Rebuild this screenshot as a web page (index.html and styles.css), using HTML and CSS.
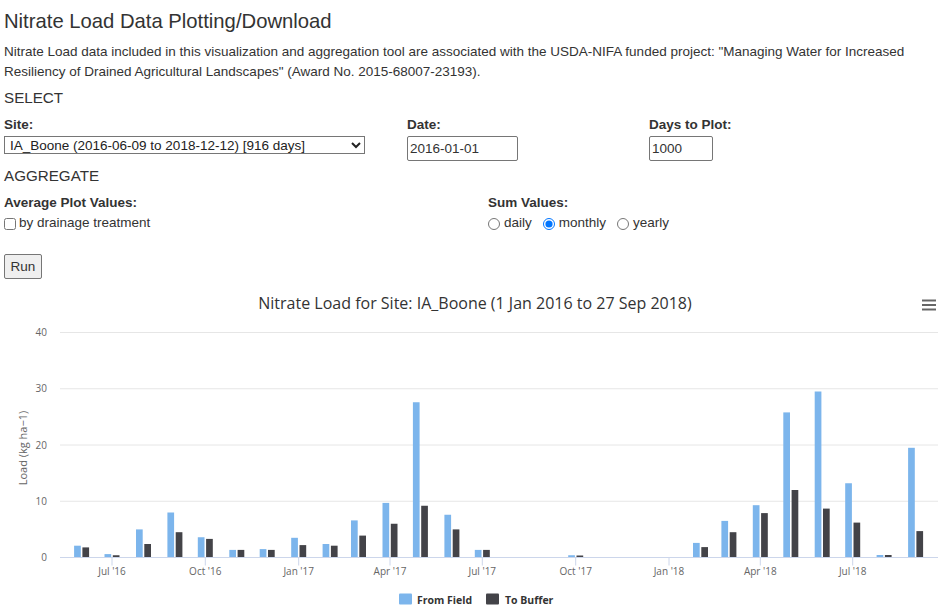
FILE: index.html
```html
<!DOCTYPE html>
<html lang="en">
<head>
<meta charset="utf-8">
<title>Nitrate Load Data Plotting/Download</title>
<link rel="stylesheet" href="styles.css">
</head>
<body>
<div class="page">
  <h1 class="title">Nitrate Load Data Plotting/Download</h1>
  <p class="intro">Nitrate Load data included in this visualization and aggregation tool are associated with the USDA-NIFA funded project: "Managing Water for Increased Resiliency of Drained Agricultural Landscapes" (Award No. 2015-68007-23193).</p>
  <div class="section">SELECT</div>
  <div class="select-row">
    <div class="field">
      <label class="lbl" for="site">Site:</label>
      <select id="site" class="site">
        <option>IA_Boone (2016-06-09 to 2018-12-12) [916 days]</option>
      </select>
    </div>
    <div class="field">
      <label class="lbl" for="date">Date:</label>
      <input id="date" class="txt date" type="text" value="2016-01-01">
    </div>
    <div class="field">
      <label class="lbl" for="days">Days to Plot:</label>
      <input id="days" class="txt days" type="text" value="1000">
    </div>
  </div>
  <div class="section section-agg">AGGREGATE</div>
  <div class="agg-row">
    <div class="field">
      <div class="lbl">Average Plot Values:</div>
      <label class="opt"><input type="checkbox" class="chk">by drainage treatment</label>
    </div>
    <div class="field">
      <div class="lbl">Sum Values:</div>
      <div class="radios">
        <label class="opt"><input type="radio" name="sum" class="rad">daily</label>
        <label class="opt"><input type="radio" name="sum" class="rad" checked>monthly</label>
        <label class="opt"><input type="radio" name="sum" class="rad">yearly</label>
      </div>
    </div>
  </div>
  <button class="run" type="button">Run</button>
</div>
<div class="chart">
<svg class="chart-svg" width="950" height="321" viewBox="0 0 950 321" xmlns="http://www.w3.org/2000/svg">
<g transform="translate(0,-290)">
  <text class="c-title" x="475" y="309.5" text-anchor="middle">Nitrate Load for Site: IA_Boone (1 Jan 2016 to 27 Sep 2018)</text>
  <g class="menu">
    <line x1="922" y1="301.5" x2="936" y2="301.5"/>
    <line x1="922" y1="306" x2="936" y2="306"/>
    <line x1="922" y1="310.5" x2="936" y2="310.5"/>
  </g>
  <g class="grid">
    <line x1="60" y1="333.5" x2="938" y2="333.5"/>
    <line x1="60" y1="389.75" x2="938" y2="389.75"/>
    <line x1="60" y1="446" x2="938" y2="446"/>
    <line x1="60" y1="502.25" x2="938" y2="502.25"/>
  </g>
  <g class="ylab">
    <text x="47" y="337">40</text>
    <text x="47" y="393.25">30</text>
    <text x="47" y="449.5">20</text>
    <text x="47" y="505.75">10</text>
    <text x="47" y="562">0</text>
  </g>
  <text class="ytitle" x="27" y="449" text-anchor="middle" transform="rotate(-90 27 449)">Load (kg ha−1)</text>
  <g class="blue">
    <rect x="74.1" y="546.7" width="6.7" height="11.8"/>
    <rect x="104.5" y="555.1" width="6.7" height="3.4"/>
    <rect x="136" y="530.4" width="6.7" height="28.1"/>
    <rect x="167.4" y="513.5" width="6.7" height="45"/>
    <rect x="197.8" y="538.25" width="6.7" height="20.25"/>
    <rect x="229.3" y="550.9" width="6.7" height="7.6"/>
    <rect x="259.7" y="550.1" width="6.7" height="8.4"/>
    <rect x="291.2" y="538.8" width="6.7" height="19.7"/>
    <rect x="322.6" y="545" width="6.7" height="13.5"/>
    <rect x="351" y="521.4" width="6.7" height="37.1"/>
    <rect x="382.5" y="503.9" width="6.7" height="54.6"/>
    <rect x="412.9" y="403.25" width="6.7" height="155.25"/>
    <rect x="444.4" y="515.75" width="6.7" height="42.75"/>
    <rect x="474.8" y="550.9" width="6.7" height="7.6"/>
    <rect x="568.2" y="556.25" width="6.7" height="2.25"/>
    <rect x="693" y="543.9" width="6.7" height="14.6"/>
    <rect x="721.4" y="521.9" width="6.7" height="36.6"/>
    <rect x="752.8" y="506.2" width="6.7" height="52.3"/>
    <rect x="783.3" y="413.4" width="6.7" height="145.1"/>
    <rect x="814.7" y="392.5" width="6.7" height="166"/>
    <rect x="845.2" y="484.25" width="6.7" height="74.25"/>
    <rect x="876.6" y="556" width="6.7" height="2.5"/>
    <rect x="908.1" y="448.8" width="6.7" height="109.7"/>
  </g>
  <g class="dark">
    <rect x="82.4" y="548.4" width="6.7" height="10.1"/>
    <rect x="112.8" y="556.25" width="6.7" height="2.25"/>
    <rect x="144.3" y="545" width="6.7" height="13.5"/>
    <rect x="175.7" y="533.2" width="6.7" height="25.3"/>
    <rect x="206.1" y="539.9" width="6.7" height="18.6"/>
    <rect x="237.6" y="550.9" width="6.7" height="7.6"/>
    <rect x="268" y="550.9" width="6.7" height="7.6"/>
    <rect x="299.5" y="546.1" width="6.7" height="12.4"/>
    <rect x="330.9" y="546.7" width="6.7" height="11.8"/>
    <rect x="359.3" y="536.6" width="6.7" height="21.9"/>
    <rect x="390.8" y="524.75" width="6.7" height="33.75"/>
    <rect x="421.2" y="506.75" width="6.7" height="51.75"/>
    <rect x="452.7" y="530.4" width="6.7" height="28.1"/>
    <rect x="483.1" y="550.9" width="6.7" height="7.6"/>
    <rect x="576.5" y="556.5" width="6.7" height="2"/>
    <rect x="701.3" y="548.1" width="6.7" height="10.4"/>
    <rect x="729.7" y="533.2" width="6.7" height="25.3"/>
    <rect x="761.1" y="514.1" width="6.7" height="44.4"/>
    <rect x="791.6" y="491" width="6.7" height="67.5"/>
    <rect x="823" y="509.6" width="6.7" height="48.9"/>
    <rect x="853.5" y="523.6" width="6.7" height="34.9"/>
    <rect x="884.9" y="556" width="6.7" height="2.5"/>
    <rect x="916.4" y="532.1" width="6.7" height="26.4"/>
  </g>
  <g class="axis">
    <line x1="60" y1="558.5" x2="938" y2="558.5"/>
    <line x1="112" y1="558.5" x2="112" y2="566.5"/>
    <line x1="205.3" y1="558.5" x2="205.3" y2="566.5"/>
    <line x1="298.7" y1="558.5" x2="298.7" y2="566.5"/>
    <line x1="390" y1="558.5" x2="390" y2="566.5"/>
    <line x1="482.3" y1="558.5" x2="482.3" y2="566.5"/>
    <line x1="575.7" y1="558.5" x2="575.7" y2="566.5"/>
    <line x1="669" y1="558.5" x2="669" y2="566.5"/>
    <line x1="760.3" y1="558.5" x2="760.3" y2="566.5"/>
    <line x1="852.7" y1="558.5" x2="852.7" y2="566.5"/>
  </g>
  <g class="xlab">
    <text x="112" y="576">Jul '16</text>
    <text x="205.3" y="576">Oct '16</text>
    <text x="298.7" y="576">Jan '17</text>
    <text x="390" y="576">Apr '17</text>
    <text x="482.3" y="576">Jul '17</text>
    <text x="575.7" y="576">Oct '17</text>
    <text x="669" y="576">Jan '18</text>
    <text x="760.3" y="576">Apr '18</text>
    <text x="852.7" y="576">Jul '18</text>
  </g>
  <g class="legend">
    <rect class="sw-blue" x="399" y="594.5" width="13" height="11" rx="1"/>
    <text x="417" y="604.5">From Field</text>
    <rect class="sw-dark" x="486" y="594.5" width="13" height="11" rx="1"/>
    <text x="505" y="604.5">To Buffer</text>
  </g>
</g>
</svg>
</div>
</body>
</html>
```
FILE: styles.css
```css
html, body {
  margin: 0;
  padding: 0;
  background: #fff;
}
body {
  font-family: "Liberation Sans", Arial, sans-serif;
  font-size: 13.5px;
  line-height: 20px;
  color: #333;
}
.page {
  padding: 0 4px;
}
.title {
  margin: 9px 0 0;
  font-size: 20.25px;
  line-height: 24px;
  font-weight: normal;
  color: #333;
}
.intro {
  margin: 9px 0 0;
  font-size: 13.5px;
  line-height: 20px;
}
.section {
  margin-top: 5px;
  font-size: 15.2px;
  line-height: 22px;
}
.section-agg {
  margin-top: 4px;
}
.select-row {
  display: grid;
  grid-template-columns: 403px 242px 1fr;
  margin-top: 6px;
}
.agg-row {
  display: grid;
  grid-template-columns: 484px 1fr;
  margin-top: 6px;
}
.field {
  display: flex;
  flex-direction: column;
  align-items: flex-start;
}
.lbl {
  font-weight: bold;
  font-size: 13.5px;
  line-height: 20px;
}
.site {
  box-sizing: border-box;
  width: 361px;
  height: 18px;
  margin: 1px 0 0;
  padding: 0 0 0 1px;
  font-family: "Liberation Sans", Arial, sans-serif;
  font-size: 13.5px;
  line-height: 16px;
  color: #222;
  border: 1px solid #767676;
  border-radius: 0;
  background: #fff;
}
.txt {
  box-sizing: border-box;
  height: 25px;
  margin: 1px 0 0;
  padding: 1px 2px;
  font-family: "Liberation Sans", Arial, sans-serif;
  font-size: 13.5px;
  color: #333;
  border: 1px solid #767676;
  border-radius: 2px;
  background: #fff;
}
.date { width: 111px; }
.days { width: 64px; }
.opt {
  display: inline-flex;
  align-items: center;
  font-size: 13.5px;
  line-height: 20px;
  color: #333;
}
.chk {
  width: 12px;
  height: 12px;
  margin: 1px 3px 0 0;
}
.radios {
  display: flex;
  gap: 11px;
}
.rad {
  width: 12px;
  height: 12px;
  margin: 1px 4px 0 0;
}
.run {
  display: block;
  box-sizing: border-box;
  width: 38px;
  height: 25px;
  margin: 21px 0 0;
  padding: 0;
  font-family: "Liberation Sans", Arial, sans-serif;
  font-size: 13.5px;
  color: #333;
  background: #efefef;
  border: 1px solid #767676;
  border-radius: 2px;
}
.chart {
  margin-top: 10px;
  height: 321px;
  overflow: hidden;
}
.chart-svg {
  display: block;
  font-family: "Open Sans", "DejaVu Sans", sans-serif;
}
.c-title {
  font-size: 16px;
  fill: #333;
}
.menu line {
  stroke: #666;
  stroke-width: 2;
}
.grid line {
  stroke: #e6e6e6;
  stroke-width: 1;
}
.axis line {
  stroke: #ccd6eb;
  stroke-width: 1;
}
.ylab text {
  font-size: 10px;
  fill: #666;
  text-anchor: end;
}
.ytitle {
  font-size: 11px;
  fill: #666;
}
.xlab text {
  font-size: 10px;
  fill: #666;
  text-anchor: middle;
}
.blue rect { fill: #7cb5ec; }
.dark rect { fill: #434348; }
.legend text {
  font-size: 10.5px;
  font-weight: bold;
  fill: #333;
}
.sw-blue { fill: #7cb5ec; }
.sw-dark { fill: #434348; }
```
